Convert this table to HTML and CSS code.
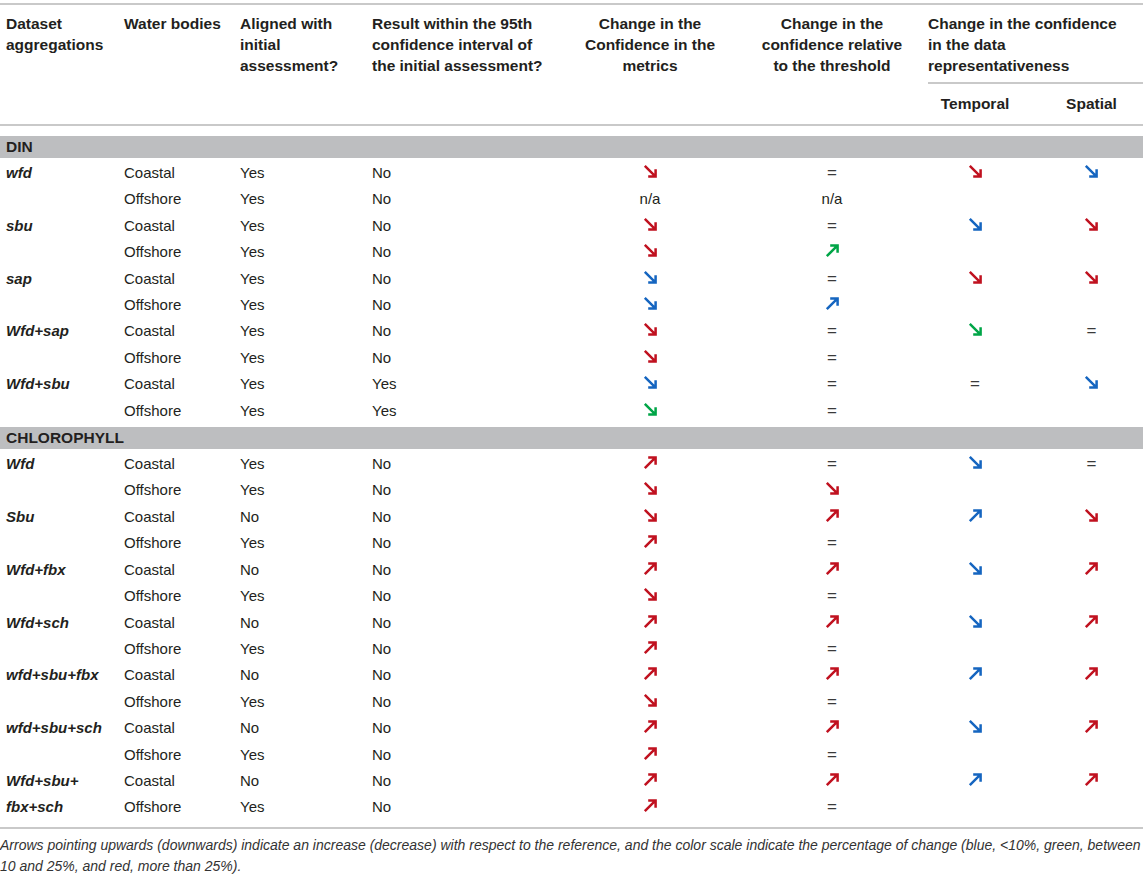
FILE: index.html
```html
<!DOCTYPE html>
<html lang="en">
<head>
<meta charset="utf-8">
<title>Table</title>
<link rel="stylesheet" href="styles.css">
</head>
<body>
<svg class="defs" width="0" height="0" aria-hidden="true">
  <defs>
    <symbol id="dn" viewBox="0 0 15 15">
      <path d="M1.8 1.8 L12.6 12.6 M5.2 12.6 H12.6 V5.2" fill="none" stroke="currentColor" stroke-width="2.5" stroke-linecap="butt" stroke-linejoin="miter"/>
    </symbol>
    <symbol id="up" viewBox="0 0 15 15">
      <path d="M1.8 13.2 L12.6 2.4 M5.2 2.4 H12.6 V9.8" fill="none" stroke="currentColor" stroke-width="2.5" stroke-linecap="butt" stroke-linejoin="miter"/>
    </symbol>
  </defs>
</svg>
<div class="page">
<table class="tbl">
  <colgroup>
    <col class="c1"><col class="c2"><col class="c3"><col class="c4"><col class="c5"><col class="c6"><col class="c7"><col class="c8">
  </colgroup>
  <thead>
    <tr class="h1">
      <th rowspan="2" class="l">Dataset<br>aggregations</th>
      <th rowspan="2" class="l">Water bodies</th>
      <th rowspan="2" class="l">Aligned with<br>initial<br>assessment?</th>
      <th rowspan="2" class="l">Result within the 95th<br>confidence interval of<br>the initial assessment?</th>
      <th rowspan="2" class="c">Change in the<br>Confidence in the<br>metrics</th>
      <th rowspan="2" class="c">Change in the<br>confidence relative<br>to the threshold</th>
      <th colspan="2" class="grp"><div class="grp-in">Change in the confidence<br>in the data<br>representativeness</div></th>
    </tr>
    <tr class="h2">
      <th class="c sub">Temporal</th>
      <th class="c sub sp">Spatial</th>
    </tr>
  </thead>
  <tbody>
    <tr class="sec first"><td colspan="8">DIN</td></tr>
    <tr><td class="ds">wfd</td><td>Coastal</td><td>Yes</td><td>No</td><td class="c"><svg class="ar red"><use href="#dn"/></svg></td><td class="c eq">=</td><td class="c"><svg class="ar red"><use href="#dn"/></svg></td><td class="c sp"><svg class="ar blue"><use href="#dn"/></svg></td></tr>
    <tr><td class="ds"></td><td>Offshore</td><td>Yes</td><td>No</td><td class="c">n/a</td><td class="c">n/a</td><td></td><td class="sp"></td></tr>
    <tr><td class="ds">sbu</td><td>Coastal</td><td>Yes</td><td>No</td><td class="c"><svg class="ar red"><use href="#dn"/></svg></td><td class="c eq">=</td><td class="c"><svg class="ar blue"><use href="#dn"/></svg></td><td class="c sp"><svg class="ar red"><use href="#dn"/></svg></td></tr>
    <tr><td class="ds"></td><td>Offshore</td><td>Yes</td><td>No</td><td class="c"><svg class="ar red"><use href="#dn"/></svg></td><td class="c"><svg class="ar green"><use href="#up"/></svg></td><td></td><td class="sp"></td></tr>
    <tr><td class="ds">sap</td><td>Coastal</td><td>Yes</td><td>No</td><td class="c"><svg class="ar blue"><use href="#dn"/></svg></td><td class="c eq">=</td><td class="c"><svg class="ar red"><use href="#dn"/></svg></td><td class="c sp"><svg class="ar red"><use href="#dn"/></svg></td></tr>
    <tr><td class="ds"></td><td>Offshore</td><td>Yes</td><td>No</td><td class="c"><svg class="ar blue"><use href="#dn"/></svg></td><td class="c"><svg class="ar blue"><use href="#up"/></svg></td><td></td><td class="sp"></td></tr>
    <tr><td class="ds">Wfd+sap</td><td>Coastal</td><td>Yes</td><td>No</td><td class="c"><svg class="ar red"><use href="#dn"/></svg></td><td class="c eq">=</td><td class="c"><svg class="ar green"><use href="#dn"/></svg></td><td class="c sp eq">=</td></tr>
    <tr><td class="ds"></td><td>Offshore</td><td>Yes</td><td>No</td><td class="c"><svg class="ar red"><use href="#dn"/></svg></td><td class="c eq">=</td><td></td><td class="sp"></td></tr>
    <tr><td class="ds">Wfd+sbu</td><td>Coastal</td><td>Yes</td><td>Yes</td><td class="c"><svg class="ar blue"><use href="#dn"/></svg></td><td class="c eq">=</td><td class="c eq">=</td><td class="c sp"><svg class="ar blue"><use href="#dn"/></svg></td></tr>
    <tr><td class="ds"></td><td>Offshore</td><td>Yes</td><td>Yes</td><td class="c"><svg class="ar green"><use href="#dn"/></svg></td><td class="c eq">=</td><td></td><td class="sp"></td></tr>

    <tr class="sec"><td colspan="8">CHLOROPHYLL</td></tr>
    <tr><td class="ds">Wfd</td><td>Coastal</td><td>Yes</td><td>No</td><td class="c"><svg class="ar red"><use href="#up"/></svg></td><td class="c eq">=</td><td class="c"><svg class="ar blue"><use href="#dn"/></svg></td><td class="c sp eq">=</td></tr>
    <tr><td class="ds"></td><td>Offshore</td><td>Yes</td><td>No</td><td class="c"><svg class="ar red"><use href="#dn"/></svg></td><td class="c"><svg class="ar red"><use href="#dn"/></svg></td><td></td><td class="sp"></td></tr>
    <tr><td class="ds">Sbu</td><td>Coastal</td><td>No</td><td>No</td><td class="c"><svg class="ar red"><use href="#dn"/></svg></td><td class="c"><svg class="ar red"><use href="#up"/></svg></td><td class="c"><svg class="ar blue"><use href="#up"/></svg></td><td class="c sp"><svg class="ar red"><use href="#dn"/></svg></td></tr>
    <tr><td class="ds"></td><td>Offshore</td><td>Yes</td><td>No</td><td class="c"><svg class="ar red"><use href="#up"/></svg></td><td class="c eq">=</td><td></td><td class="sp"></td></tr>
    <tr><td class="ds">Wfd+fbx</td><td>Coastal</td><td>No</td><td>No</td><td class="c"><svg class="ar red"><use href="#up"/></svg></td><td class="c"><svg class="ar red"><use href="#up"/></svg></td><td class="c"><svg class="ar blue"><use href="#dn"/></svg></td><td class="c sp"><svg class="ar red"><use href="#up"/></svg></td></tr>
    <tr><td class="ds"></td><td>Offshore</td><td>Yes</td><td>No</td><td class="c"><svg class="ar red"><use href="#dn"/></svg></td><td class="c eq">=</td><td></td><td class="sp"></td></tr>
    <tr><td class="ds">Wfd+sch</td><td>Coastal</td><td>No</td><td>No</td><td class="c"><svg class="ar red"><use href="#up"/></svg></td><td class="c"><svg class="ar red"><use href="#up"/></svg></td><td class="c"><svg class="ar blue"><use href="#dn"/></svg></td><td class="c sp"><svg class="ar red"><use href="#up"/></svg></td></tr>
    <tr><td class="ds"></td><td>Offshore</td><td>Yes</td><td>No</td><td class="c"><svg class="ar red"><use href="#up"/></svg></td><td class="c eq">=</td><td></td><td class="sp"></td></tr>
    <tr><td class="ds">wfd+sbu+fbx</td><td>Coastal</td><td>No</td><td>No</td><td class="c"><svg class="ar red"><use href="#up"/></svg></td><td class="c"><svg class="ar red"><use href="#up"/></svg></td><td class="c"><svg class="ar blue"><use href="#up"/></svg></td><td class="c sp"><svg class="ar red"><use href="#up"/></svg></td></tr>
    <tr><td class="ds"></td><td>Offshore</td><td>Yes</td><td>No</td><td class="c"><svg class="ar red"><use href="#dn"/></svg></td><td class="c eq">=</td><td></td><td class="sp"></td></tr>
    <tr><td class="ds">wfd+sbu+sch</td><td>Coastal</td><td>No</td><td>No</td><td class="c"><svg class="ar red"><use href="#up"/></svg></td><td class="c"><svg class="ar red"><use href="#up"/></svg></td><td class="c"><svg class="ar blue"><use href="#dn"/></svg></td><td class="c sp"><svg class="ar red"><use href="#up"/></svg></td></tr>
    <tr><td class="ds"></td><td>Offshore</td><td>Yes</td><td>No</td><td class="c"><svg class="ar red"><use href="#up"/></svg></td><td class="c eq">=</td><td></td><td class="sp"></td></tr>
    <tr><td class="ds">Wfd+sbu+</td><td>Coastal</td><td>No</td><td>No</td><td class="c"><svg class="ar red"><use href="#up"/></svg></td><td class="c"><svg class="ar red"><use href="#up"/></svg></td><td class="c"><svg class="ar blue"><use href="#up"/></svg></td><td class="c sp"><svg class="ar red"><use href="#up"/></svg></td></tr>
    <tr><td class="ds">fbx+sch</td><td>Offshore</td><td>Yes</td><td>No</td><td class="c"><svg class="ar red"><use href="#up"/></svg></td><td class="c eq">=</td><td></td><td class="sp"></td></tr>
  </tbody>
</table>
<p class="note">Arrows pointing upwards (downwards) indicate an increase (decrease) with respect to the reference, and the color scale indicate the percentage of change (blue, &lt;10%, green, between 10 and 25%, and red, more than 25%).</p>
</div>
</body>
</html>
```
FILE: styles.css
```css
html, body {
  margin: 0;
  padding: 0;
  background: #ffffff;
}
body {
  font-family: "Liberation Sans", Arial, sans-serif;
  color: #231f20;
}
.defs {
  position: absolute;
  width: 0;
  height: 0;
  overflow: hidden;
}
.page {
  width: 1143px;
  padding-top: 3px;
}
.tbl {
  width: 1143px;
  table-layout: fixed;
  border-collapse: separate;
  border-spacing: 0;
}
.c1 { width: 118px; }
.c2 { width: 116px; }
.c3 { width: 132px; }
.c4 { width: 190px; }
.c5 { width: 188px; }
.c6 { width: 176px; }
.c7 { width: 110px; }
.c8 { width: 113px; }

th {
  font-weight: bold;
  font-size: 15.5px;
  line-height: 21px;
  vertical-align: top;
  padding: 8px 0 0 6px;
  color: #231f20;
}
th.l { text-align: left; }
th.c { text-align: center; padding-left: 0; }
.h1 th {
  border-top: 2px solid #c9c9c9;
}
th[rowspan] {
  border-bottom: 2px solid #c9c9c9;
}
th.grp {
  text-align: left;
  padding-left: 8px;
}
.grp-in {
  padding-bottom: 6px;
  border-bottom: 2px solid #c9c9c9;
}
.h2 th {
  padding-top: 9px;
  padding-bottom: 10px;
  border-bottom: 2px solid #c9c9c9;
}
th.sp, td.sp {
  padding-left: 10px;
}

.sec td {
  background: #bdbec0;
  font-weight: bold;
  font-size: 15.5px;
  height: 22px;
  line-height: 22px;
  padding: 0 0 0 6px;
  border-top: 3px solid #ffffff;
  border-bottom: 2px solid #ffffff;
}
.sec.first td {
  border-top-width: 10px;
}

td {
  font-size: 15px;
  height: 26.4px;
  line-height: 26.4px;
  padding: 0 0 0 6px;
  vertical-align: middle;
  white-space: nowrap;
  color: #231f20;
}
td.c {
  text-align: center;
  padding-left: 0;
}
td.c.sp {
  padding-left: 10px;
}
td.ds {
  font-weight: bold;
  font-style: italic;
}
td.eq {
  color: #3a3a3a;
  font-size: 17px;
}

.ar {
  width: 15px;
  height: 15px;
  vertical-align: -1px;
  display: inline-block;
}
.red { color: #c0111f; }
.blue { color: #1565c0; }
.green { color: #00a547; }

.note {
  margin: 6px 0 0 0;
  border-top: 2px solid #c9c9c9;
  padding-top: 6px;
  font-style: italic;
  font-size: 14px;
  line-height: 21px;
  color: #333333;
}
```
